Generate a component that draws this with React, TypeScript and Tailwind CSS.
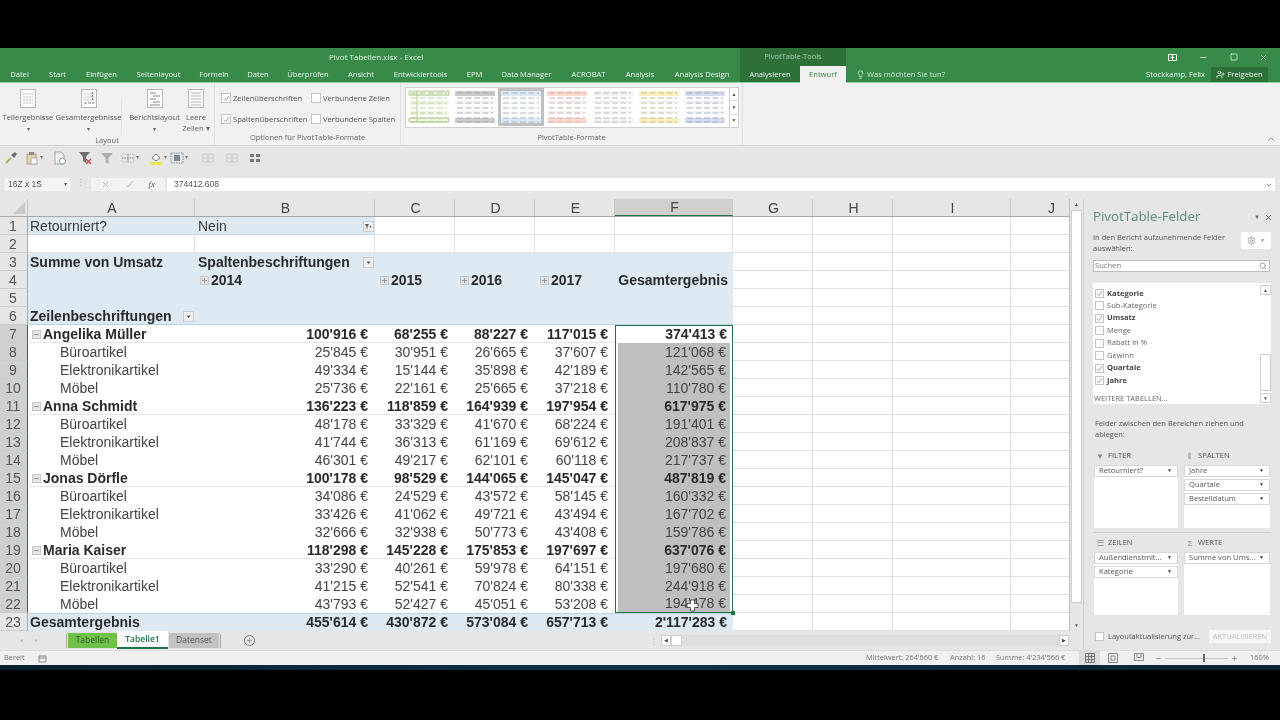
import { ChevronDown, ChevronUp, Lightbulb, Minus, Plus, Search, Settings, Square, UserPlus, X } from 'lucide-react'

const tabs = [
  ['Datei', 'w-[39px]'],
  ['Start', 'w-[37px]'],
  ['Einfügen', 'w-[51px]'],
  ['Seitenlayout', 'w-[63px]'],
  ['Formeln', 'w-[48px]'],
  ['Daten', 'w-[40px]'],
  ['Überprüfen', 'w-[60px]'],
  ['Ansicht', 'w-[46px]'],
  ['Entwicklertools', 'w-[73px]'],
  ['EPM', 'w-[35px]'],
  ['Data Manager', 'w-[69px]'],
  ['ACROBAT', 'w-[55px]'],
  ['Analysis', 'w-[48px]'],
  ['Analysis Design', 'w-[76px]'],
]

const columns = ['A', 'B', 'C', 'D', 'E', 'F', 'G', 'H', 'I', 'J']
const colWidths = [
  'w-[167px]',
  'w-[180px]',
  'w-[80px]',
  'w-[80px]',
  'w-[80px]',
  'w-[118px]',
  'w-[80px]',
  'w-[80px]',
  'w-[118px]',
  'w-[80px]',
]

type DataRow = { label: string; bold: boolean; values: string[] }

const data: DataRow[] = [
  { label: 'Angelika Müller', bold: true, values: ["100'916", "68'255", "88'227", "117'015", "374'413"] },
  { label: 'Büroartikel', bold: false, values: ["25'845", "30'951", "26'665", "37'607", "121'068"] },
  { label: 'Elektronikartikel', bold: false, values: ["49'334", "15'144", "35'898", "42'189", "142'565"] },
  { label: 'Möbel', bold: false, values: ["25'736", "22'161", "25'665", "37'218", "110'780"] },
  { label: 'Anna Schmidt', bold: true, values: ["136'223", "118'859", "164'939", "197'954", "617'975"] },
  { label: 'Büroartikel', bold: false, values: ["48'178", "33'329", "41'670", "68'224", "191'401"] },
  { label: 'Elektronikartikel', bold: false, values: ["41'744", "36'313", "61'169", "69'612", "208'837"] },
  { label: 'Möbel', bold: false, values: ["46'301", "49'217", "62'101", "60'118", "217'737"] },
  { label: 'Jonas Dörfle', bold: true, values: ["100'178", "98'529", "144'065", "145'047", "487'819"] },
  { label: 'Büroartikel', bold: false, values: ["34'086", "24'529", "43'572", "58'145", "160'332"] },
  { label: 'Elektronikartikel', bold: false, values: ["33'426", "41'062", "49'721", "43'494", "167'702"] },
  { label: 'Möbel', bold: false, values: ["32'666", "32'938", "50'773", "43'408", "159'786"] },
  { label: 'Maria Kaiser', bold: true, values: ["118'298", "145'228", "175'853", "197'697", "637'076"] },
  { label: 'Büroartikel', bold: false, values: ["33'290", "40'261", "59'978", "64'151", "197'680"] },
  { label: 'Elektronikartikel', bold: false, values: ["41'215", "52'541", "70'824", "80'338", "244'918"] },
  { label: 'Möbel', bold: false, values: ["43'793", "52'427", "45'051", "53'208", "194'478"] },
]

const totals = ["455'614", "430'872", "573'084", "657'713", "2'117'283"]

function RowHead({ n, active }: { n: number; active?: boolean }) {
  return (
    <div
      className={`w-[28px] h-[18px] shrink-0 flex items-center justify-center pt-[1px] pr-[1px] text-[14px] text-[#555] border-b border-[#cccccc] ${
        active ? 'bg-[#d0d0ce] border-r border-r-[#217346]' : 'bg-[#e6e6e6] border-r border-r-[#a8a8a8]'
      }`}
    >
      {n}
    </div>
  )
}

// empty cells right of the pivot
function Blanks() {
  return (
    <>
      {colWidths.slice(6).map((w, i) => (
        <div key={i} className={`${w} h-[18px] shrink-0 border-r border-b border-[#e0e0e0]`} />
      ))}
    </>
  )
}

function PlusBox({ minus }: { minus?: boolean }) {
  return (
    <svg width="9" height="9" viewBox="0 0 9 9" className="shrink-0">
      <rect x="0.5" y="0.5" width="8" height="8" fill="#e4e4e4" stroke="#c8c8c8" />
      <path d="M2 4.5h5" stroke="#999" />
      {!minus && <path d="M4.5 2v5" stroke="#999" />}
    </svg>
  )
}

function DropBtn({ filter }: { filter?: boolean }) {
  return (
    <div className="w-[11px] h-[11px] bg-[#f0f0f0] border border-[#cccccc] flex items-center justify-center shrink-0">
      <svg width="7" height="7" viewBox="0 0 7 7">
        <path d={filter ? 'M0 1h4L2.5 3.5V6L1.5 5V3.5zM4.5 3h2L5.500 5z' : 'M1.500 2.500h4L3.500 5z'} fill="#555" />
      </svg>
    </div>
  )
}

function TopRows() {
  const cell = 'h-[18px] shrink-0 flex items-center'
  const text = 'text-[14px] text-[#3a3a3a]'
  const bold = 'text-[14px] font-bold text-[#2a2a2a]'
  const white = 'border-r border-b border-[#e0e0e0]'
  return (
    <>
      <div className="flex">
        <RowHead n={1} />
        <div className={`${colWidths[0]} ${cell} ${text} bg-[#dde9f3] border-b border-[#c3d8ea] pl-[2px] pt-[1px]`}>Retourniert?</div>
        <div className={`${colWidths[1]} ${cell} ${text} bg-[#dde9f3] border-b border-[#c3d8ea] pl-[3px] pr-[1px] pt-[1px] justify-between`}>
          Nein
          <DropBtn filter />
        </div>
        {colWidths.slice(2, 6).map((w, i) => (
          <div key={i} className={`${w} ${cell} ${white}`} />
        ))}
        <Blanks />
      </div>
      <div className="flex">
        <RowHead n={2} />
        {colWidths.slice(0, 6).map((w, i) => (
          <div key={i} className={`${w} ${cell} ${white}`} />
        ))}
        <Blanks />
      </div>
      <div className="flex">
        <RowHead n={3} />
        <div className={`${colWidths[0]} ${cell} ${bold} bg-[#dde9f3] pl-[2px]`}>Summe von Umsatz</div>
        <div className={`${colWidths[1]} ${cell} ${bold} bg-[#dde9f3] pl-[3px] pr-[1px] justify-between`}>
          Spaltenbeschriftungen
          <DropBtn />
        </div>
        {colWidths.slice(2, 6).map((w, i) => (
          <div key={i} className={`${w} ${cell} bg-[#dde9f3]`} />
        ))}
        <Blanks />
      </div>
      <div className="flex">
        <RowHead n={4} />
        <div className={`${colWidths[0]} ${cell} bg-[#dde9f3]`} />
        {['2014', '2015', '2016', '2017'].map((y, i) => (
          <div key={y} className={`${colWidths[i + 1]} ${cell} ${bold} bg-[#dde9f3] pl-[5px] gap-[2px]`}>
            <PlusBox />
            {y}
          </div>
        ))}
        <div className={`${colWidths[5]} ${cell} ${bold} bg-[#dde9f3] justify-end pr-[5px]`}>Gesamtergebnis</div>
        <Blanks />
      </div>
      <div className="flex">
        <RowHead n={5} />
        <div className="w-[705px] h-[18px] shrink-0 bg-[#dde9f3]" />
        <Blanks />
      </div>
      <div className="flex">
        <RowHead n={6} />
        <div className={`${colWidths[0]} ${cell} ${bold} bg-[#dde9f3] border-b border-[#b9d2e8] pl-[2px] pr-[1px] pt-[1px] justify-between`}>
          Zeilenbeschriftungen
          <DropBtn />
        </div>
        <div className="w-[538px] h-[18px] shrink-0 bg-[#dde9f3] border-b border-[#b9d2e8]" />
        <Blanks />
      </div>
    </>
  )
}

function PivotRow({ row, n }: { row: DataRow; n: number }) {
  const textClass = row.bold ? 'font-bold text-[#2a2a2a]' : 'text-[#444]'
  const line = row.bold ? 'border-b border-[#dbe7f1] pt-[1px]' : ''
  const first = n === 7
  const last = n === 22
  return (
    <div className="flex">
      <RowHead n={n} active />
      <div className={`${colWidths[0]} h-[18px] shrink-0 flex items-center text-[14px] ${textClass} ${line} ${row.bold ? 'pl-[4px] gap-[2px]' : 'pl-[32px]'}`}>
        {row.bold && <PlusBox minus />}
        {row.label}
      </div>
      {row.values.slice(0, 4).map((v, i) => (
        <div key={i} className={`${colWidths[i + 1]} h-[18px] shrink-0 flex items-center justify-end pr-[7px] text-[14px] ${textClass} ${line}`}>
          {v} €
        </div>
      ))}
      <div
        className={`${colWidths[5]} h-[18px] shrink-0 border-x border-[#217346] ${first ? 'border-t' : ''} ${last ? 'border-b' : ''} ${first ? '' : 'px-[2px]'}`}
      >
        <div className={`h-full flex items-center justify-end text-[14px] ${textClass} ${first ? 'pr-[5px]' : 'pr-[4px] bg-[#bfbfbf]'}`}>
          {row.values[4]} €
        </div>
      </div>
      <Blanks />
    </div>
  )
}

function Sheet() {
  return (
    <div className="relative">
      <div className="flex h-[18px] bg-[#e6e6e6] border-b border-[#a8a8a8]">
        <div className="w-[28px] shrink-0 flex items-end justify-end pr-[2px] pb-[2px] border-r border-[#c4c4c4]">
          <svg width="12" height="12" viewBox="0 0 12 12">
            <path d="M12 0v12H0z" fill="#c8c8c8" />
          </svg>
        </div>
        {columns.map((c, i) => (
          <div
            key={c}
            className={`${colWidths[i]} shrink-0 flex items-center justify-center pl-[2px] pt-[1px] text-[14px] text-[#444] border-r border-[#c8c8c8] ${
              c === 'F' ? 'bg-[#d0d0ce] border-b border-b-[#217346]' : ''
            }`}
          >
            {c}
          </div>
        ))}
      </div>
      <TopRows />
      {data.map((r, i) => (
        <PivotRow key={i} row={r} n={i + 7} />
      ))}
      <div className="flex">
        <RowHead n={23} />
        <div className={`${colWidths[0]} h-[18px] shrink-0 flex items-center pl-[2px] text-[14px] font-bold text-[#2a2a2a] bg-[#dde9f3] border-t border-[#b9d2e8]`}>
          Gesamtergebnis
        </div>
        {totals.map((v, i) => (
          <div
            key={i}
            className={`${colWidths[i + 1]} h-[18px] shrink-0 flex items-center justify-end text-[14px] font-bold text-[#2a2a2a] bg-[#dde9f3] border-t border-[#b9d2e8] ${
              i === 4 ? 'pr-[6px]' : 'pr-[7px]'
            }`}
          >
            {v} €
          </div>
        ))}
        <Blanks />
      </div>
      {/* fill handle */}
      <div className="absolute left-[731px] top-[412px] w-[4px] h-[4px] bg-[#217346]" />
      {/* mouse cursor */}
      <svg width="13" height="13" viewBox="0 0 13 13" className="absolute left-[686px] top-[400px]">
        <path d="M4.500 1h4v3.500H12v4H8.500V12h-4V8.500H1v-4h3.500z" fill="#fff" stroke="#333" strokeWidth="0.8" />
      </svg>
    </div>
  )
}

function SheetIcon({ kind }: { kind: number }) {
  return (
    <svg width="16" height="19" viewBox="0 0 16 19">
      <rect x="0.500" y="0.500" width="15" height="18" fill="#fbfbfb" stroke="#b8b8b8" />
      {kind === 0 && <path d="M3 5h10M3 8h10M3 11h10M3 14h10" stroke="#bdbdbd" strokeDasharray="2 1" />}
      {kind === 1 && (
        <>
          <path d="M3 5h10M3 8h10M3 11h10" stroke="#bdbdbd" strokeDasharray="2 1" />
          <path d="M3 14h10" stroke="#888" strokeDasharray="3 1" />
          <path d="M11.500 3v9" stroke="#777" strokeDasharray="2 1" />
        </>
      )}
      {kind === 2 && <path d="M3 4h6M6 7h7M3 10h6M6 13h7M3 16h10" stroke="#8c8c8c" />}
      {kind === 3 && <path d="M3 4h10M3 7h10M3 10h10M3 13h10M3 16h10" stroke="#b4b4b4" />}
    </svg>
  )
}

function RibbonBtn({ icon, label, width, second }: { icon: number; label: string; width: string; second?: boolean }) {
  return (
    <div className={`${width} shrink-0 flex flex-col items-center text-[7.600px] leading-[11px] text-[#555] whitespace-nowrap`}>
      <SheetIcon kind={icon} />
      <div className="mt-[4px]">{label}</div>
      <div className="text-[#666]">{second ? 'Zeilen ▾' : <span className="text-[6px]">▾</span>}</div>
    </div>
  )
}

function Check({ on, size }: { on?: boolean; size?: string }) {
  return (
    <div className={`${size ?? 'w-[9px] h-[9px]'} shrink-0 bg-white border border-[#c4c4c4] flex items-center justify-center`}>
      {on && (
        <svg width="7" height="7" viewBox="0 0 7 7">
          <path d="M1 3.800 2.800 5.600 6 1" fill="none" stroke="#888" strokeWidth="0.8" />
        </svg>
      )}
    </div>
  )
}

function Thumb({ head, band, line, active, frame, width }: { head: string; band?: string; line: string; active?: boolean; frame?: boolean; width: number }) {
  const ys = [5, 10, 15, 20, 25, 30, 34]
  return (
    <svg width={width} height="38" viewBox={`0 0 ${width} 38`} className={active ? 'bg-[#bfbfbf] shrink-0' : 'bg-white shrink-0'}>
      {active && <rect x="3" y="3" width={width - 6} height="32" fill="#fff" />}
      <rect x="3" y="3" width={width - 6} height="5" fill={head} />
      <rect x="3" y="30" width={width - 6} height="5" fill={head} />
      {band && <rect x="3" y="13" width={width - 6} height="4" fill={band} />}
      {band && <rect x="3" y="23" width={width - 6} height="4" fill={band} />}
      {ys.map(y => (
        <path key={y} d={`M5 ${y}h${width - 10}`} stroke={line} strokeWidth="0.9" strokeDasharray="6 2.500" />
      ))}
      {frame && <path d="M3 3h40v4H3zM3 30h40v4H3zM11 3v31" fill="none" stroke="#9dbb75" strokeWidth="0.7" />}
      {!band && !active && <path d={`M3 14h${width - 6}M3 24h${width - 6}`} stroke="#d4d4d4" strokeWidth="0.6" />}
    </svg>
  )
}

function Ribbon() {
  return (
    <div className="h-[63px] flex bg-[#f1f1f1] border-b border-[#d2d2d2] text-[#555]">
      <div className="w-[215px] shrink-0 flex flex-col border-r border-[#e0e0e0]">
        <div className="flex-1 pt-[6px] flex">
          <RibbonBtn icon={0} label="Teilergebnisse" width="w-[56px]" />
          <RibbonBtn icon={1} label="Gesamtergebnisse" width="w-[65px]" />
          <div className="w-px h-[36px] mt-[10px] shrink-0 bg-[#e4e4e4]" />
          <RibbonBtn icon={2} label="Berichtslayout" width="w-[65px]" />
          <RibbonBtn icon={3} label="Leere" width="w-[18px]" second />
        </div>
        <div className="h-[13px] text-[7.500px] text-center text-[#666]">Layout</div>
      </div>
      <div className="w-[186px] shrink-0 flex flex-col border-r border-[#e0e0e0]">
        <div className="flex-1 pt-[10px] pl-[6px] grid grid-cols-[90px_1fr] gap-y-[11px] text-[7.600px] leading-[10px] text-[#555] content-start">
          <div className="flex items-center gap-[2px]"><Check on size="w-[10px] h-[10px]" />Zeilenüberschriften</div>
          <div className="flex items-center gap-[2px]"><Check size="w-[10px] h-[10px]" />Verbundene Zeilen</div>
          <div className="flex items-center gap-[2px]"><Check on size="w-[10px] h-[10px]" />Spaltenüberschriften</div>
          <div className="flex items-center gap-[2px]"><Check size="w-[10px] h-[10px]" />Verbundene Spalten</div>
        </div>
        <div className="h-[13px] text-[7.500px] text-center text-[#666]">Optionen für PivotTable-Formate</div>
      </div>
      <div className="w-[342px] shrink-0 flex flex-col border-r border-[#e0e0e0]">
        <div className="flex-1 pt-[4px] pl-[4px]">
          <div className="flex w-[334px] h-[41px] bg-white border border-[#cfcfcf]">
            <Thumb width={46} head="#ecf5dd" band="#f0f7e4" line="#b4c9a0" frame />
            <Thumb width={46} head="#cbcbcb" line="#a4a4a4" />
            <Thumb width={46} head="#dce9f5" line="#a2b0bc" active />
            <Thumb width={46} head="#f9dccf" line="#c4a89c" />
            <Thumb width={46} head="#f4f4f4" line="#b0b0b0" />
            <Thumb width={46} head="#fdf1c4" line="#bdb48c" />
            <Thumb width={46} head="#d6dcee" line="#9aa2ba" />
            <div className="w-[9px] ml-auto flex flex-col border-l border-[#cfcfcf] text-[5px] leading-none text-[#555]">
              <div className="flex-1 flex items-center justify-center border-b border-[#dcdcdc]">▲</div>
              <div className="flex-1 flex items-center justify-center border-b border-[#dcdcdc]">▼</div>
              <div className="flex-1 flex items-center justify-center">▼</div>
            </div>
          </div>
        </div>
        <div className="h-[13px] text-[7.500px] text-center text-[#666]">PivotTable-Formate</div>
      </div>
      <div className="flex-1 flex items-end justify-end pr-[4px] pb-[1px]">
        <ChevronUp size={10} className="text-[#777]" />
      </div>
    </div>
  )
}

function ToolIcon({ kind }: { kind: string }) {
  return (
    <svg width="14" height="14" viewBox="0 0 14 14">
      {kind === 'wand' && (
        <>
          <path d="M2 12 7 7" stroke="#b8a860" strokeWidth="2.200" />
          <path d="M7 4l3 3 3-4-2-2z" fill="#707070" />
        </>
      )}
      {kind === 'paste' && (
        <>
          <rect x="2" y="3" width="9" height="10" fill="#ddd4b4" stroke="#b0a68a" />
          <rect x="6" y="7" width="6" height="6" fill="#fff" stroke="#aaa" />
          <rect x="4" y="1" width="5" height="3" fill="#8a8a8a" />
        </>
      )}
      {kind === 'doc' && (
        <>
          <path d="M2 1h6l3 3v9H2z" fill="#f4f4f4" stroke="#a4a4a4" />
          <circle cx="9.500" cy="10" r="3" fill="#fff" stroke="#7aa898" />
        </>
      )}
      {kind === 'clear' && (
        <>
          <path d="M1 1h11L8 6v6L5 10V6z" fill="#6f6f6f" />
          <path d="M8 8l5 5M13 8l-5 5" stroke="#d04050" strokeWidth="1.400" />
        </>
      )}
      {kind === 'funnel' && <path d="M1 2h12L8.500 7v6l-3-2V7z" fill="#aeaeae" />}
      {kind === 'grid' && (
        <>
          <path d="M1 3h12v8H1z" fill="none" stroke="#c0c0c0" strokeDasharray="1.500 1" />
          <path d="M7 3v8M1 7h12" fill="none" stroke="#888" strokeDasharray="1.500 1" />
        </>
      )}
      {kind === 'bucket' && (
        <>
          <path d="M3 7l4-4 4 4-4 3z" fill="#fff" stroke="#777" />
          <rect x="1" y="11" width="12" height="3" fill="#f0ea50" />
        </>
      )}
      {kind === 'box' && (
        <>
          <rect x="1" y="2" width="12" height="10" fill="#e4e9ec" stroke="#888" strokeDasharray="1.500 1" />
          <rect x="4" y="4" width="6" height="6" fill="#7d8a96" />
        </>
      )}
      {kind === 'light' && <path d="M2 3h10v8H2zM7 3v8M2 7h10" fill="none" stroke="#c8c8c8" />}
      {kind === 'four' && <path d="M2 3h4v3H2zM8 3h4v3H8zM2 8h4v3H2zM8 8h4v3H8z" fill="#777" />}
    </svg>
  )
}

function Tool({ kind, width, drop }: { kind: string; width: string; drop?: boolean }) {
  return (
    <div className={`${width} flex items-center justify-center gap-[1px] shrink-0`}>
      <ToolIcon kind={kind} />
      {drop && <span className="text-[6px] text-[#777]">▾</span>}
    </div>
  )
}

function Toolbar() {
  return (
    <div className="h-[26px] flex items-center pl-[3px] pb-[3px] bg-[#e6e6e6]">
      <Tool kind="wand" width="w-[15px]" />
      <Tool kind="paste" width="w-[32px]" drop />
      <Tool kind="doc" width="w-[20px]" />
      <Tool kind="clear" width="w-[30px]" />
      <Tool kind="funnel" width="w-[14px]" />
      <Tool kind="grid" width="w-[32px]" drop />
      <Tool kind="bucket" width="w-[24px]" drop />
      <Tool kind="box" width="w-[18px]" drop />
      <Tool kind="light" width="w-[24px] ml-[8px]" />
      <Tool kind="light" width="w-[24px]" />
      <Tool kind="four" width="w-[22px]" />
    </div>
  )
}

function FormulaBar() {
  return (
    <div className="h-[27px] bg-[#e6e6e6] flex pt-[6px] pl-[5px] pr-[5px] text-[8.500px] text-[#555] font-['Liberation_Sans',sans-serif]">
      <div className="w-[65px] h-[13px] bg-[#f4f4f4] flex items-center justify-between px-[3px]">
        16Z x 1S
        <span className="text-[6px]">▾</span>
      </div>
      <div className="w-[21px] text-center leading-[11px] text-[#bbb]">⋮</div>
      <div className="w-[74px] h-[13px] bg-[#f2f2f2] flex items-center justify-around text-[#b0b0b0] px-[3px]">
        <X size={9} />
        <svg width="9" height="9" viewBox="0 0 9 9">
          <path d="M1 5l2 2 5-6" fill="none" stroke="#bbb" />
        </svg>
        <span className="italic font-['Liberation_Serif',serif] text-[#555]">fx</span>
      </div>
      <div className="flex-1 ml-[2px] h-[13px] bg-white flex items-center justify-between pl-[7px] pr-[2px]">
        374412.608
        <ChevronDown size={8} />
      </div>
    </div>
  )
}

function SheetTabs() {
  return (
    <div className="h-[19px] flex items-center bg-[#e6e6e6] text-[8.500px]">
      <div className="w-[66px] shrink-0 flex justify-center gap-[12px] text-[6px] text-[#bbb] pr-[8px]">
        <span>◂</span>
        <span>▸</span>
      </div>
      <div className="w-[2px] h-[14px] shrink-0 border-l border-[#aaa]" />
      <div className="w-[49px] h-[15px] shrink-0 bg-[#70c04c] text-[#2e5a2a] flex items-center justify-center">Tabellen</div>
      <div className="w-[51px] h-[18px] mb-[1px] shrink-0 bg-white text-[#217346] font-semibold border-b-2 border-[#217346] flex items-center justify-center">Tabelle1</div>
      <div className="w-[50px] h-[15px] ml-[1px] shrink-0 bg-[#c2c2c2] text-[#555] flex items-center justify-center">Datenset</div>
      <div className="w-[1px] h-[14px] ml-[1px] shrink-0 bg-[#aaa]" />
      <div className="w-[57px] shrink-0 flex justify-center">
        <div className="w-[11px] h-[11px] rounded-full border border-[#777] flex items-center justify-center text-[#666]">
          <Plus size={7} />
        </div>
      </div>
    </div>
  )
}

function HScroll() {
  return (
    <div className="flex items-center h-[19px] bg-[#e6e6e6] pr-[14px]">
      <span className="w-[11px] text-[#bbb] text-[8px]">⋮</span>
      <div className="w-[10px] h-[11px] bg-white border border-[#cfcfcf] flex items-center justify-center text-[5px] text-[#444]">◀</div>
      <div className="w-[11px] h-[11px] bg-white border border-[#cfcfcf]" />
      <div className="flex-1 h-[11px] bg-[#dedede]" />
      <div className="w-[10px] h-[11px] bg-white border border-[#cfcfcf] flex items-center justify-center text-[5px] text-[#444]">▶</div>
    </div>
  )
}

function VScroll() {
  return (
    <div className="w-[14px] shrink-0 flex flex-col items-center bg-[#e6e6e6] text-[5px] text-[#555] border-l border-[#bdbdbd]">
      <div className="h-[11px] flex items-center">▲</div>
      <div className="w-[11px] h-[393px] bg-white border border-[#cfcfcf]" />
      <div className="flex-1" />
      <div className="h-[11px] flex items-center">▼</div>
    </div>
  )
}

function Field({ label, on }: { label: string; on?: boolean }) {
  return (
    <div className="h-[12.750px] flex items-center gap-[3px] pl-[2px]">
      <Check on={on} />
      <span className={on ? 'font-bold text-[#444]' : 'text-[#666]'}>{label}</span>
    </div>
  )
}

function AreaItem({ label }: { label: string }) {
  return (
    <div className="h-[12px] mb-[2px] bg-white border border-[#d8d8d8] flex items-center justify-between pl-[4px] pr-[5px] text-[#555]">
      <span className="whitespace-nowrap">{label}</span>
      <span className="text-[5px] text-[#333]">▼</span>
    </div>
  )
}

function Area({ icon, title, items, width }: { icon: string; title: string; items: string[]; width: string }) {
  return (
    <div className={width}>
      <div className="h-[16px] pb-[2px] flex items-center gap-[4px] pl-[2px] text-[7.600px] text-[#555]">
        <span className="w-[8px] text-center text-[8px] text-[#888]">{icon}</span>
        {title}
      </div>
      <div className="h-[63px] bg-white text-[7.600px]">
        {items.map(it => (
          <AreaItem key={it} label={it} />
        ))}
      </div>
    </div>
  )
}

function FieldPanel() {
  return (
    <div className="w-[197px] shrink-0 h-[451px] bg-[#e6e6e6] border-l border-[#cfcfcf] pl-[9px] pr-[9px] text-[7.600px] text-[#555]">
      <div className="h-[33px] pt-[3px] flex items-center justify-between">
        <span className="text-[13.300px] text-[#5c8f72]">PivotTable-Felder</span>
        <div className="flex items-center gap-[4px] text-[#666] -mr-[2px]">
          <span className="text-[6px]">▼</span>
          <X size={9} strokeWidth={2.500} />
        </div>
      </div>
      <div className="h-[17px] flex justify-between leading-[10.500px] text-[7.500px]">
        <div>
          In den Bericht aufzunehmende Felder
          <br />
          auswählen:
        </div>
        <div className="w-[30px] h-[17px] bg-white flex items-center justify-center gap-[4px] text-[#888]">
          <Settings size={9} />
          <span className="text-[5px]">▼</span>
        </div>
      </div>
      <div className="mt-[11px] h-[12px] w-[177px] bg-white border border-[#bdbdbd] flex items-center justify-between pl-[1px] pr-[2px] text-[#777]">
        Suchen
        <Search size={8} />
      </div>
      <div className="mt-[11px] h-[121px] w-[178px] bg-white flex">
        <div className="flex-1 pt-[4px] flex flex-col">
          <Field label="Kategorie" on />
          <Field label="Sub-Kategorie" />
          <Field label="Umsatz" on />
          <Field label="Menge" />
          <Field label="Rabatt in %" />
          <Field label="Gewinn" />
          <Field label="Quartale" on />
          <Field label="Jahre" on />
          <div className="mt-[6px] pl-[1px] text-[7.500px] text-[#666]">WEITERE TABELLEN...</div>
        </div>
        <div className="w-[11px] flex flex-col text-[5px] text-center text-[#555]">
          <div className="h-[10px] mt-[2px] border border-[#cfcfcf] leading-[8px]">▲</div>
          <div className="flex-1 mt-[59px] mb-[2px] border border-[#cfcfcf]" />
          <div className="h-[10px] mb-[1px] border border-[#cfcfcf] leading-[8px]">▼</div>
        </div>
      </div>
      <div className="mt-[14px] h-[31px] pl-[2px] leading-[10.500px] text-[7.500px]">
        Felder zwischen den Bereichen ziehen und
        <br />
        ablegen:
      </div>
      <div className="flex gap-[6px] pl-[1px]">
        <Area icon="▼" title="FILTER" items={['Retourniert?']} width="w-[84px]" />
        <Area icon="⦀" title="SPALTEN" items={['Jahre', 'Quartale', 'Bestelldatum']} width="w-[86px]" />
      </div>
      <div className="mt-[4px] mb-[3px] h-px w-[178px] bg-[#cfcfcf]" />
      <div className="flex gap-[6px] pl-[1px]">
        <Area icon="☰" title="ZEILEN" items={['Außendienstmit...', 'Kategorie']} width="w-[84px]" />
        <Area icon="Σ" title="WERTE" items={['Summe von Ums...']} width="w-[86px]" />
      </div>
      <div className="mt-[14px] pt-[1px] flex items-center justify-between pl-[2px]">
        <div className="flex items-center gap-[4px] text-[7.500px]">
          <Check />
          Layoutaktualisierung zur...
        </div>
        <div className="w-[62px] h-[13px] bg-[#f6f6f6] text-[#bbb] flex items-center justify-center text-[7.500px]">AKTUALISIEREN</div>
      </div>
    </div>
  )
}

function StatusBar() {
  return (
    <div className="h-[15px] flex items-center bg-[#f0f0f0] border-t border-[#dcdcdc] text-[7.400px] text-[#777]">
      <span className="pl-[4px] w-[38px]">Bereit</span>
      <svg width="9" height="9" viewBox="0 0 9 9">
        <path d="M1 2h7v6H1zM1 4h7" fill="none" stroke="#888" />
      </svg>
      <div className="flex-1" />
      <span className="w-[84px] shrink-0">Mittelwert: 264'660 €</span>
      <span className="w-[46px] shrink-0">Anzahl: 16</span>
      <span className="w-[83px] shrink-0">Summe: 4'234'566 €</span>
      <div className="w-[21px] h-full shrink-0 bg-[#dcdcdc] flex items-center justify-center">
        <svg width="10" height="10" viewBox="0 0 10 10">
          <path d="M0.500 0.500h9v9h-9zM3.500 0.500v9M6.500 0.500v9M0.500 3.500h9M0.500 6.500h9" fill="none" stroke="#777" />
        </svg>
      </div>
      <div className="w-[25px] shrink-0 flex justify-center">
        <svg width="10" height="10" viewBox="0 0 10 10">
          <path d="M0.500 0.500h9v9h-9zM3 3h4v4H3z" fill="none" stroke="#888" />
        </svg>
      </div>
      <div className="w-[28px] shrink-0 flex justify-center">
        <svg width="10" height="10" viewBox="0 0 10 10">
          <path d="M0.500 0.500h9v7h-9zM3 0.500v4h4v-4" fill="none" stroke="#888" />
        </svg>
      </div>
      <div className="w-[95px] shrink-0 flex items-center pl-[2px] text-[#666]">
        <Minus size={7} />
        <div className="w-[63px] mx-[3px] h-px bg-[#c8c8c8] flex items-center pl-[38px]">
          <div className="w-[2px] h-[8px] bg-[#666]" />
        </div>
        <Plus size={7} />
      </div>
      <span className="w-[32px] shrink-0 pl-[2px] whitespace-nowrap">160%</span>
    </div>
  )
}

export default function App() {
  return (
    <div className="w-[1280px] h-[720px] overflow-hidden bg-black flex flex-col font-['Open_Sans',sans-serif] blur-[0.3px]">
      <div className="h-[48px] shrink-0" />
      <div className="h-[18px] flex items-center bg-[#388a49] text-[8px] text-[#e6f2e8]">
        <div className="w-[740px] pl-[329px]">Pivot Tabellen.xlsx - Excel</div>
        <div className="w-[106px] h-full bg-[#2d7139] flex items-center justify-center text-[#a8cdb0] text-[7.500px]">PivotTable-Tools</div>
        <div className="flex-1 flex items-center justify-end pr-[12px] gap-[20px]">
          <svg width="9" height="7" viewBox="0 0 9 7">
            <path d="M0.500 0.500h8v6h-8zM4.500 1v5M2.500 3.500h4" fill="none" stroke="#fff" />
          </svg>
          <Minus size={9} className="text-white ml-[2px]" />
          <Square size={8} className="text-white ml-[2px]" />
          <X size={9} className="text-white ml-[1px]" />
        </div>
      </div>
      <div className="h-[17px] flex bg-[#388a49] text-[7.600px] text-[#eef6f0] border-b border-[#8fd09f]">
        {tabs.map(([label, w]) => (
          <div key={label} className={`${w} shrink-0 flex items-center justify-center pt-[1px] whitespace-nowrap`}>
            {label}
          </div>
        ))}
        <div className="w-[60px] shrink-0 bg-[#2d7139] flex items-center justify-center pt-[1px]">Analysieren</div>
        <div className="w-[46px] h-[17px] shrink-0 bg-[#f1f1f1] text-[#37864a] flex items-center justify-center pt-[1px]">Entwurf</div>
        <div className="flex-1 flex items-center pl-[10px] pt-[1px]">
          <Lightbulb size={9} className="mr-[2px] text-[#e0efe3]" />
          <span className="text-[#d4e8d8]">Was möchten Sie tun?</span>
          <div className="flex-1" />
          <span>Stockkamp, Felix</span>
          <div className="w-[57px] h-full ml-[6px] mr-[12px] bg-[#2d7139] flex items-center justify-center gap-[2px]">
            <UserPlus size={9} />
            Freigeben
          </div>
        </div>
      </div>
      <Ribbon />
      <Toolbar />
      <FormulaBar />
      <div className="flex h-[451px] bg-white">
        <div className="w-[1083px] shrink-0 flex flex-col">
          <div className="flex h-[432px] overflow-hidden font-['Liberation_Sans',sans-serif]">
            <div className="w-[1069px] shrink-0 overflow-hidden">
              <div className="w-[1100px]">
                <Sheet />
              </div>
            </div>
            <VScroll />
          </div>
          <div className="flex">
            <div className="w-[650px] shrink-0">
              <SheetTabs />
            </div>
            <div className="flex-1">
              <HScroll />
            </div>
          </div>
        </div>
        <FieldPanel />
      </div>
      <StatusBar />
      <div className="h-[5px] shrink-0 bg-gradient-to-r from-[#07202e] via-[#0d3348] to-[#0a2433]" />
    </div>
  )
}
